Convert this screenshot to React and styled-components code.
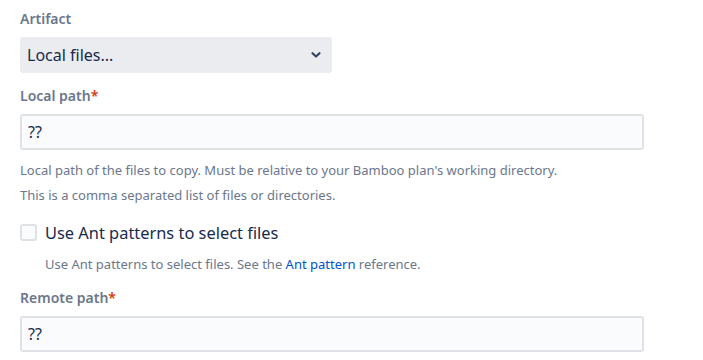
import React from "react";
import styled, { createGlobalStyle } from "styled-components";

const Global = createGlobalStyle`
  html, body { margin: 0; padding: 0; background: #fff; }
  body { font-family: "Noto Sans", "Open Sans", sans-serif; color: #172b4d; }
`;

const Form = styled.div`
  padding: 9px 20px 0 20px;
  width: 624px;
  display: flex;
  flex-direction: column;
`;

const Label = styled.label`
  display: block;
  font-size: 14px;
  font-weight: 600;
  color: #6b778c;
  line-height: 20px;
  margin-top: ${(p) => p.$mt || 0}px;
  margin-bottom: ${(p) => p.$mb || 0}px;
`;

const Req = styled.span`
  color: #de350b;
`;

const SelectBox = styled.div`
  width: 312px;
  height: 36px;
  box-sizing: border-box;
  background: #ebecf0;
  border-radius: 3px;
  display: flex;
  align-items: center;
  justify-content: space-between;
  padding: 0 10px 0 7px;
  font-size: 16px;
  color: #172b4d;
`;

const Input = styled.div`
  width: 624px;
  height: 36px;
  box-sizing: border-box;
  background: #fafbfc;
  border: 2px solid #dfe1e6;
  border-radius: 3px;
  display: flex;
  align-items: center;
  padding: 0 6px;
  font-size: 16px;
  color: #172b4d;
`;

const Help = styled.div`
  font-size: 13px;
  color: #6b778c;
  line-height: 25px;
  padding-left: ${(p) => p.$indent || 0}px;
`;

const HelpBlock = styled.div`
  margin-top: 8px;
`;

const CheckRow = styled.div`
  display: flex;
  align-items: center;
  gap: 8px;
  margin-top: 13px;
  font-size: 16.4px;
  color: #172b4d;
`;

const Box = styled.span`
  width: 13px;
  height: 13px;
  border: 2px solid #dfe1e6;
  background: #fafbfc;
  border-radius: 3px;
  display: inline-block;
`;

const Link = styled.a`
  color: #0052cc;
  text-decoration: none;
`;

export default function App() {
  return (
    <>
      <Global />
      <Form>
        <Label $mb={8}>Artifact</Label>
        <SelectBox>
          <span>Local files...</span>
          <svg width="12" height="12" viewBox="0 0 12 12">
            <path d="M2.5 4.2 L6 7.5 L9.5 4.2" fill="none" stroke="#344563" strokeWidth="2.2" strokeLinecap="round" strokeLinejoin="round" />
          </svg>
        </SelectBox>
        <Label $mt={13} $mb={8}>
          Local path<Req>*</Req>
        </Label>
        <Input>??</Input>
        <HelpBlock>
          <Help>Local path of the files to copy. Must be relative to your Bamboo plan's working directory.</Help>
          <Help>This is a comma separated list of files or directories.</Help>
        </HelpBlock>
        <CheckRow>
          <Box />
          <span>Use Ant patterns to select files</span>
        </CheckRow>
        <HelpBlock>
          <Help $indent={25}>
            Use Ant patterns to select files. See the <Link href="#">Ant pattern</Link> reference.
          </Help>
        </HelpBlock>
        <Label $mt={11} $mb={8}>
          Remote path<Req>*</Req>
        </Label>
        <Input>??</Input>
      </Form>
    </>
  );
}
